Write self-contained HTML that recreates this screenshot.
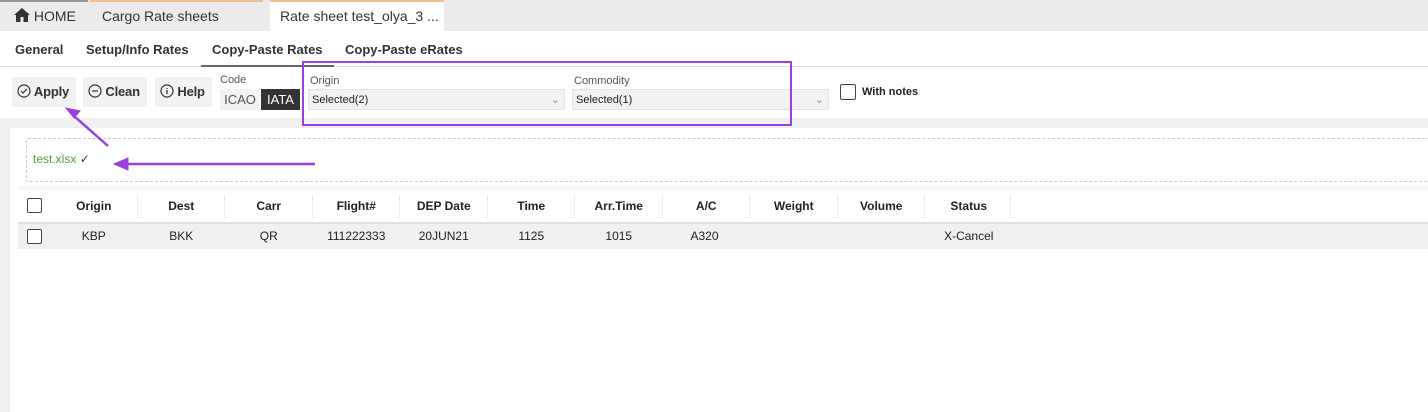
<!DOCTYPE html><html><head><style>
*{box-sizing:border-box;margin:0;padding:0}
body{width:1428px;height:412px;overflow:hidden;background:#fff;font-family:"Liberation Sans",Arial,sans-serif;position:relative;color:#222}
.abs{position:absolute}
.top{left:0;top:0;width:1428px;height:31px;background:#ebebeb}
.tab{top:0;height:31px;font-size:14px;line-height:33px;padding-left:14px;color:#333;white-space:nowrap}
.sub{top:31px;height:36px;font-size:13px;font-weight:bold;line-height:38px;color:#333;white-space:nowrap}
.btn{top:77px;height:30px;background:#f2f2f2;font-size:13px;font-weight:bold;line-height:30px;padding:0 5px;color:#333;white-space:nowrap;letter-spacing:-0.2px}
.sel{height:21px;background:#f2f2f2;border:1px solid #e3e3e3;font-size:11px;line-height:20px;padding-left:3px;color:#222}
.lbl{font-size:11px;color:#555}
.h{top:190px;height:32px;font-size:12px;font-weight:bold;line-height:32px;text-align:center;width:87.5px}
.c{top:224px;height:25px;font-size:12px;line-height:25px;text-align:center;width:87.5px}
.cb{width:15px;height:15px;border:1.5px solid #444;border-radius:2px;background:#fff}
.sep{width:0;border-left:1px dotted #ddd;top:196px;height:22px}
</style></head><body>
<div class="abs top"></div>
<div class="abs" style="left:0;top:0;width:88px;height:2px;background:#999"></div>
<div class="abs" style="left:90px;top:0;width:173px;height:2px;background:#f0c090"></div>
<div class="abs" style="left:270px;top:0;width:174px;height:31px;background:#fff;border-top:2px solid #f0c090"></div>
<div class="abs tab" style="left:0;padding-left:14px"><svg width="16" height="14" viewBox="0 0 16 14" style="vertical-align:-1px"><path d="M8 0L0 7h2v7h4.5V9h3v5H14V7h2z" fill="#333"/></svg> HOME</div>
<div class="abs tab" style="left:88px">Cargo Rate sheets</div>
<div class="abs tab" style="left:266px">Rate sheet test_olya_3 ...</div>
<div class="abs sub" style="left:15px">General</div>
<div class="abs sub" style="left:86px">Setup/Info Rates</div>
<div class="abs sub" style="left:212px">Copy-Paste Rates</div>
<div class="abs sub" style="left:345px">Copy-Paste eRates</div>
<div class="abs" style="left:0;top:66px;width:1428px;height:1px;background:#ddd"></div>
<div class="abs" style="left:201px;top:65px;width:133px;height:2px;background:#666"></div>
<div class="abs btn" style="left:12px;width:64px">
<svg width="14" height="14" viewBox="0 0 14 14" style="vertical-align:-2px"><circle cx="7" cy="7" r="6" fill="none" stroke="#333" stroke-width="1.2"/><path d="M4 7l2 2 4-4" fill="none" stroke="#333" stroke-width="1.2"/></svg> Apply</div>
<div class="abs btn" style="left:83px;width:64px">
<svg width="14" height="14" viewBox="0 0 14 14" style="vertical-align:-2px"><circle cx="7" cy="7" r="6" fill="none" stroke="#333" stroke-width="1.2"/><path d="M4 7h6" stroke="#333" stroke-width="1.2"/></svg> Clean</div>
<div class="abs btn" style="left:155px;width:57px">
<svg width="14" height="14" viewBox="0 0 14 14" style="vertical-align:-2px"><circle cx="7" cy="7" r="6" fill="none" stroke="#333" stroke-width="1.2"/><path d="M7 6v4M7 4v1" stroke="#333" stroke-width="1.3"/></svg> Help</div>
<div class="abs lbl" style="left:220px;top:74px">Code</div>
<div class="abs" style="left:220px;top:89px;width:40px;height:21px;background:#f2f2f2;font-size:13px;line-height:21px;text-align:center;color:#555">ICAO</div>
<div class="abs" style="left:261px;top:89px;width:39px;height:21px;background:#333;color:#fff;font-size:13px;line-height:21px;text-align:center">IATA</div>
<div class="abs lbl" style="left:310px;top:75px">Origin</div>
<div class="abs sel" style="left:308px;top:89px;width:257px">Selected(2)<span style="position:absolute;right:4px;top:0;color:#888">⌄</span></div>
<div class="abs lbl" style="left:574px;top:75px">Commodity</div>
<div class="abs sel" style="left:572px;top:89px;width:257px">Selected(1)<span style="position:absolute;right:4px;top:0;color:#888">⌄</span></div>
<div class="abs cb" style="left:840px;top:84px;width:16px;height:16px"></div>
<div class="abs" style="left:862px;top:86px;font-size:11px;font-weight:bold">With notes</div>
<div class="abs" style="left:0;top:118px;width:1428px;height:10px;background:#f0f0f0"></div>
<div class="abs" style="left:0;top:118px;width:10px;height:294px;background:#f0f0f0"></div>
<div class="abs" style="left:302px;top:61px;width:490px;height:65px;border:2px solid #9b3fe0"></div>
<div class="abs" style="left:26px;top:138px;width:1410px;height:44px;border:1px dashed #ccc;border-radius:2px"></div>
<div class="abs" style="left:33px;top:152px;font-size:12px;color:#5a9a3a">test.xlsx <span style="color:#333">✓</span></div>
<div class="abs" style="left:18px;top:186px;width:1410px;height:4px;background:#f6f6f6"></div>
<div class="abs" style="left:18px;top:222px;width:1410px;height:2px;background:#e2e2e2"></div>
<div class="abs" style="left:18px;top:224px;width:1410px;height:25px;background:#f0f0f1"></div>
<div class="abs cb" style="left:27px;top:198px"></div>
<div class="abs cb" style="left:27px;top:229px"></div>
<div class="abs h" style="left:50px">Origin</div><div class="abs h" style="left:137.5px">Dest</div><div class="abs h" style="left:225px">Carr</div><div class="abs h" style="left:312.5px">Flight#</div><div class="abs h" style="left:400px">DEP Date</div><div class="abs h" style="left:487.5px">Time</div><div class="abs h" style="left:575px">Arr.Time</div><div class="abs h" style="left:662.5px">A/C</div><div class="abs h" style="left:750px">Weight</div><div class="abs h" style="left:837.5px">Volume</div><div class="abs h" style="left:925px">Status</div>
<div class="abs sep" style="left:137px"></div><div class="abs sep" style="left:224px"></div><div class="abs sep" style="left:312px"></div><div class="abs sep" style="left:399px"></div><div class="abs sep" style="left:487px"></div><div class="abs sep" style="left:574px"></div><div class="abs sep" style="left:662px"></div><div class="abs sep" style="left:749px"></div><div class="abs sep" style="left:837px"></div><div class="abs sep" style="left:924px"></div><div class="abs sep" style="left:1010px"></div>
<div class="abs c" style="left:50px">KBP</div><div class="abs c" style="left:137.5px">BKK</div><div class="abs c" style="left:225px">QR</div><div class="abs c" style="left:312.5px">111222333</div><div class="abs c" style="left:400px">20JUN21</div><div class="abs c" style="left:487.5px">1125</div><div class="abs c" style="left:575px">1015</div><div class="abs c" style="left:662.5px;text-align:left;padding-left:28px">A320</div><div class="abs c" style="left:925px">X-Cancel</div>
<svg class="abs" style="left:0;top:0" width="400" height="200"><g stroke="#9b3fe0" stroke-width="2.5" fill="#9b3fe0">
<line x1="108" y1="146" x2="74" y2="116"/><path d="M66 108l14 3-6 7z" stroke-width="1"/>
<line x1="315" y1="164" x2="126" y2="164"/><path d="M114 164l14-6v12z" stroke-width="1"/></g></svg>
</body></html>
